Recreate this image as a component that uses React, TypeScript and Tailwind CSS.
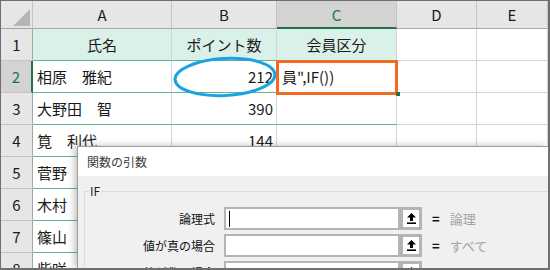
import { Fragment } from "react";

type SheetRow = {
  n: number;
  a: string;
  b: string;
  c: string;
};

const COLUMNS = ["A", "B", "C", "D", "E"];

const ROWS: SheetRow[] = [
  { n: 1, a: "氏名", b: "ポイント数", c: "会員区分" },
  { n: 2, a: "相原　雅紀", b: "212", c: "員\",IF())" },
  { n: 3, a: "大野田　智", b: "390", c: "" },
  { n: 4, a: "筧　利代", b: "144", c: "" },
  { n: 5, a: "菅野", b: "", c: "" },
  { n: 6, a: "木村", b: "", c: "" },
  { n: 7, a: "篠山", b: "", c: "" },
  { n: 8, a: "柴咲", b: "", c: "" },
];

const FIELDS = [
  { label: "論理式", value: "論理", active: true },
  { label: "値が真の場合", value: "すべて", active: false },
  { label: "値が偽の場合", value: "すべて", active: false },
];

function RefButton() {
  return (
    <div className="flex h-[23px] w-[22px] shrink-0 items-center justify-center border-[3px] border-[#b4b4b4] bg-white">
      <svg width="9" height="11" viewBox="0 0 9 11">
        <path d="M4.5 0 L9 4.5 L6 4.5 L6 8 L3 8 L3 4.5 L0 4.5 Z" fill="#000" />
        <rect x="0" y="9.4" width="9" height="1.6" fill="#000" />
      </svg>
    </div>
  );
}

function FunctionArgsDialog() {
  return (
    <div className="absolute top-[145px] right-0 bottom-0 left-[76px] overflow-hidden border-t border-l border-[#9c9c9c] bg-[#f0f0f0] shadow-[-3px_-1px_6px_rgba(0,0,0,0.22)]">
      <div className="flex h-[29px] items-center bg-white pl-[9px] text-[12px] leading-none text-[#3a3a3a]">
        関数の引数
      </div>
      <div className="pt-[15px] pl-[6px]">
        <div className="relative border-t border-l border-[#dcdcdc] pt-[15px]">
          <span className="absolute -top-[8px] left-[4px] bg-[#f0f0f0] px-[1px] text-[12px] leading-[14px] text-[#222]">
            IF
          </span>
          <div className="flex flex-col gap-[4px]">
            {FIELDS.map((field) => (
              <div className="flex h-[23px] shrink-0 items-center" key={field.label}>
                <p className="w-[130px] text-right text-[12px] leading-none text-[#111]">
                  {field.label}
                </p>
                <div className="ml-[9px] flex h-[23px] w-[176px] items-center border-2 border-[#b4b4b4] bg-white pl-[3px]">
                  {field.active ? <span className="h-[16px] w-px bg-black" /> : null}
                </div>
                <RefButton />
                <span className="ml-[10px] text-[13px] leading-none font-bold text-[#111]">=</span>
                <span className="ml-[10px] text-[13px] leading-none text-[#a3a3a3]">
                  {field.value}
                </span>
              </div>
            ))}
          </div>
        </div>
      </div>
    </div>
  );
}

export default function App() {
  return (
    <div className="relative h-[270px] w-[550px] overflow-hidden border-t border-r-2 border-b-2 border-l border-[#6f6f6f] bg-white font-['Noto_Sans_CJK_JP',sans-serif] text-[#1a1a1a]">
      <div className="grid grid-cols-[32px_139px_105px_120px_80px_71px]">
        <div className="flex h-[28px] items-end justify-end border-r border-b border-r-[#c4c4c4] border-b-[#a6a6a6] bg-[#e6e6e6] pr-[2px] pb-[2px]">
          <svg width="17" height="17" viewBox="0 0 17 17">
            <path d="M17 0 L17 17 L0 17 Z" fill="#b5b5b5" />
          </svg>
        </div>
        {COLUMNS.map((col) =>
          col === "C" ? (
            <div
              className="flex h-[28px] items-center justify-center border-r border-b-2 border-r-[#c4c4c4] border-b-[#217346] bg-[#d3d3d3] text-[15px] leading-none text-[#217346]"
              key={col}
            >
              {col}
            </div>
          ) : (
            <div
              className="flex h-[28px] items-center justify-center border-r border-b border-r-[#c4c4c4] border-b-[#a6a6a6] bg-[#e6e6e6] text-[15px] leading-none"
              key={col}
            >
              {col}
            </div>
          )
        )}

        {ROWS.map((row) => (
          <Fragment key={row.n}>
            {row.n === 2 ? (
              <div className="flex h-[32px] items-center justify-center border-r-2 border-b border-r-[#217346] border-b-[#c4c4c4] bg-[#d3d3d3] text-[15px] leading-none text-[#217346]">
                {row.n}
              </div>
            ) : (
              <div className="flex h-[32px] items-center justify-center border-r border-b border-r-[#a6a6a6] border-b-[#c4c4c4] bg-[#e6e6e6] text-[15px] leading-none">
                {row.n}
              </div>
            )}
            {row.n === 1 ? (
              <>
                <div className="flex h-[32px] items-center justify-center border-r border-b border-r-[#d4d4d4] border-b-[#5fb394] bg-[#daf1e9] text-[15px] leading-none">
                  {row.a}
                </div>
                <div className="flex h-[32px] items-center justify-center border-r border-b border-r-[#d4d4d4] border-b-[#5fb394] bg-[#daf1e9] text-[15px] leading-none">
                  {row.b}
                </div>
                <div className="flex h-[32px] items-center justify-center border-r border-b border-r-[#d4d4d4] border-b-[#5fb394] bg-[#daf1e9] text-[15px] leading-none">
                  {row.c}
                </div>
              </>
            ) : (
              <>
                <div className="flex h-[32px] items-center overflow-hidden border-r border-b border-r-[#d4d4d4] border-b-[#5fb394] pl-[4px] text-[15px] leading-none whitespace-nowrap">
                  {row.a}
                </div>
                <div className="flex h-[32px] items-center justify-end border-r border-b border-r-[#d4d4d4] border-b-[#5fb394] pr-[3px] text-[15px] leading-none">
                  {row.b}
                </div>
                <div className="flex h-[32px] items-center border-r border-b border-r-[#d4d4d4] border-b-[#5fb394] pl-[5px] text-[15px] leading-none whitespace-nowrap">
                  {row.c}
                </div>
              </>
            )}
            <div className="h-[32px] border-r border-b border-[#d4d4d4]" />
            <div className="h-[32px] border-r border-b border-[#d4d4d4]" />
          </Fragment>
        ))}
      </div>

      <svg
        className="pointer-events-none absolute top-0 left-0"
        width="548"
        height="267"
        viewBox="0 0 548 267"
      >
        <ellipse
          cx="224"
          cy="76"
          rx="50"
          ry="18.5"
          fill="none"
          stroke="#1ba3e0"
          strokeWidth="3"
          transform="rotate(-3 224 76)"
        />
      </svg>

      <div className="pointer-events-none absolute top-[59px] left-[275px] h-[35px] w-[122px] border-[3px] border-[#f26a21]" />
      <div className="absolute top-[91px] left-[395px] h-[4px] w-[4px] bg-[#217346]" />

      <FunctionArgsDialog />
    </div>
  );
}
